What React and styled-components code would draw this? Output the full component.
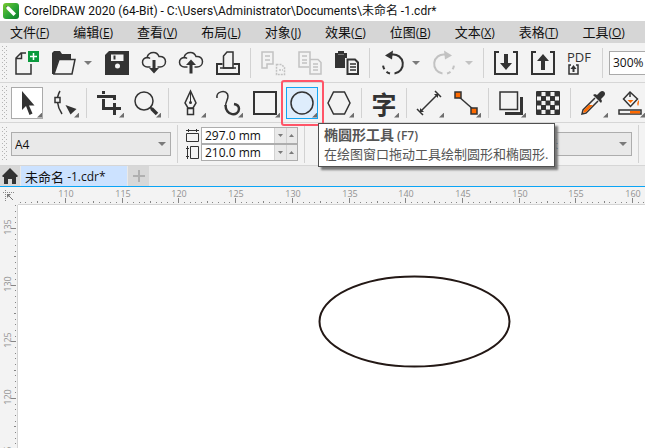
import React from "react";
import styled, { createGlobalStyle, css } from "styled-components";

const INK = "#333333";
const FADED = "#c2c2c2";
const ORANGE = "#ff6a00";

const GlobalStyle = createGlobalStyle`
  * { box-sizing: border-box; }
  body { margin: 0; }
  body, button, input, select {
    font-family: "Open Sans", "Noto Sans CJK SC", sans-serif;
    font-size: 12px;
    color: #111;
  }
  button { border: 0; padding: 0; background: none; }
`;

const Window = styled.div`
  min-height: 100vh;
  display: flex;
  flex-direction: column;
  overflow: hidden;
  background: #f3f3f3;
`;

const TitleBar = styled.header`
  height: 21px;
  display: flex;
  align-items: center;
  gap: 5px;
  padding-left: 3px;
  background: #fff;
  white-space: pre;
`;

const Title = styled.h1`
  margin: 0;
  font-family: Roboto, "Noto Sans CJK SC", sans-serif;
  font-size: 12px;
  line-height: 20px;
  font-weight: 400;
`;

const MenuBar = styled.nav`
  height: 22px;
  display: flex;
  align-items: center;
  gap: 24px;
  background: #d6d6d6;
  padding-left: 10px;
  overflow: hidden;
`;

const MenuItem = styled.button`
  flex: none;
  text-align: left;
  font-size: 13px;
  line-height: 20px;
  white-space: nowrap;
  span { font-size: 12px; }
`;

const Bar = styled.div`
  height: ${(p) => p.$height}px;
  display: flex;
  align-items: center;
  gap: 5px;
  padding-left: 2px;
  border-bottom: 1px solid #d6d6d6;
`;

const GripBox = styled.svg`
  flex: none;
  width: 6px;
  height: 34px;
  margin-right: -2px;
`;

const Divider = styled.span`
  flex: none;
  width: 3px;
  height: ${(p) => p.$height || 30}px;
  background: linear-gradient(#d2d2d2, #d2d2d2) center / 1px 100% no-repeat;
`;

const ToolButton = styled.button`
  position: relative;
  flex: none;
  width: 32px;
  height: 32px;
  display: grid;
  place-items: center;
  ${(p) => p.$look === "picked" && css`
    background: #fff;
    box-shadow: inset 0 0 0 1px #aaa;
  `}
  ${(p) => p.$look === "hover" && css`
    background: #deedfc;
    box-shadow: inset 0 0 0 1px #12a5f4;
  `}
  ${(p) => p.$flyout && css`
    &::after {
      content: "";
      position: absolute;
      right: 1px;
      bottom: 1px;
      width: 5px;
      height: 5px;
      background: #6e6e6e;
      clip-path: polygon(100% 0, 100% 100%, 0 100%);
    }
  `}
`;

const Anchor = styled.div`
  position: relative;
  flex: none;
`;

const Highlight = styled.span`
  position: absolute;
  inset: -7px -6px -7px -5px;
  border: 2px solid #ff5568;
  border-radius: 3px;
  pointer-events: none;
`;

const Tooltip = styled.div`
  position: absolute;
  z-index: 2;
  left: 32px;
  top: 36px;
  padding: 2px 6px 3px 5px;
  border: 1px solid #505050;
  background: #fff;
  box-shadow: 3px 3px 2px #777;
  color: #555;
  font-size: 13px;
  line-height: 18px;
  white-space: nowrap;
`;

const TooltipTitle = styled.strong`
  display: block;
  font-size: 14px;
  span { font-size: 12px; font-weight: 600; }
`;

const Split = styled.div`
  flex: none;
  display: flex;
`;

const DropButton = styled.button`
  width: 16px;
  height: 32px;
  display: grid;
  place-items: center;
`;

const Glyph = styled.svg`
  display: block;
  flex: none;
  overflow: visible;
  width: ${(p) => p.$w || 24}px;
  height: ${(p) => p.$h || 24}px;
`;

const TextTool = styled.span`
  font-family: "Noto Sans CJK SC", sans-serif;
  font-size: 25px;
  line-height: 24px;
  font-weight: 700;
  color: ${INK};
`;

const ZoomBox = styled.input`
  flex: none;
  width: 70px;
  height: 24px;
  padding: 0 3px;
  border: 1px solid #aaa;
  background: #fff;
`;

const SelectBox = styled.div`
  flex: none;
  width: ${(p) => p.$width}px;
  height: 24px;
  display: grid;
  align-items: center;
  border: 1px solid #adadad;
  background: #e9e9e9;
  > * { grid-area: 1 / 1; }
  > svg { justify-self: end; margin-right: 4px; pointer-events: none; }
`;

const Select = styled.select`
  appearance: none;
  width: 100%;
  height: 22px;
  padding: 0 3px;
  border: 0;
  background: transparent;
`;

const SizeGroup = styled.div`
  flex: none;
  display: grid;
  grid-template-columns: 15px 97px;
  align-items: center;
  margin-left: 2px;
`;

const SizeField = styled.div`
  height: 17px;
  display: flex;
  border: 1px solid #adadad;
  background: #e9e9e9;
`;

const SizeInput = styled.input`
  width: 72px;
  padding: 0 3px;
  border: 0;
  background: #fff;
`;

const StepButton = styled.button`
  flex: 1;
  display: grid;
  place-items: center;
  border-left: 1px solid #d2d2d2;
`;

const UnitGroup = styled.div`
  flex: none;
  display: flex;
  align-items: center;
  gap: 5px;
  margin-left: auto;
  padding-right: 5px;
`;

const TabBar = styled.div`
  height: 21px;
  display: flex;
  gap: 1px;
  background: #e9e9e9;
  border-bottom: 1px solid #0aa4f5;
`;

const Tab = styled.button`
  width: ${(p) => p.$width}px;
  display: flex;
  align-items: center;
  justify-content: ${(p) => (p.$current ? "flex-start" : "center")};
  padding-left: ${(p) => (p.$current ? 4 : 0)}px;
  background: ${(p) => (p.$current ? "#cce2ff" : "#d8d8d8")};
  font-size: 13px;
  white-space: pre;
  span { font-size: 12px; }
`;

const Workspace = styled.main`
  flex: 1;
  display: grid;
  grid-template-columns: 18px 1fr;
  grid-template-rows: 18px 1fr;
`;

const RulerOrigin = styled.button`
  display: grid;
  place-items: center;
`;

const Ruler = styled.svg`
  width: 100%;
  height: 100%;
  overflow: hidden;
  background: #f3f3f3;
  border: 0 solid #d4d4d4;
  border-width: ${(p) => (p.$vertical ? "0 1px 0 0" : "0 0 1px 0")};
  text { font-size: 9px; fill: #929292; text-anchor: middle; }
  rect { fill: #868686; }
`;

const RulerSlot = styled.div`
  position: relative;
  overflow: hidden;
  > svg { position: absolute; inset: 0; }
`;

const Canvas = styled.section`
  background: #fff;
  overflow: hidden;
  svg { display: block; width: 100%; height: 240px; }
`;

const s = (w = 2, c = INK) => ({ fill: "none", stroke: c, strokeWidth: w });

function Grip() {
  const dots = [];
  for (let y = 0; y < 34; y += 2) {
    for (let x = y % 4 === 0 ? 0 : 2; x < 6; x += 4) dots.push(<rect key={`${x}-${y}`} x={x} y={y} width="1" height="1" fill="#b4b4b4" />);
  }
  return <GripBox aria-hidden="true">{dots}</GripBox>;
}

const Caret = ({ color = "#7a7a7a", up, small }) => (
  <Glyph $w={small ? 5 : 8} $h={small ? 3 : 4} viewBox="0 0 8 4" preserveAspectRatio="none" aria-hidden="true">
    <path d={up ? "M0 4h8L4 0z" : "M0 0h8L4 4z"} fill={color} />
  </Glyph>
);

const arrowDown = "M10 3h4v9h4l-6 7-6-7h4z";
const arrowUp = "M10 19h4v-9h4l-6-7-6 7h4z";
const cloud = "M8.500 16H5.500A4.700 4.700 0 0 1 5 6.500C6 3 8.500 1.500 11.500 1.500c2.500 0 4.500 1.500 5.500 4 4-.5 6.500 2 6.500 5 0 3.500-2.500 5.500-5.500 5.500h-2.500M5 6.500q2 0 3 1";
const turn = (c) => (
  <>
    <path d="M9 3.500h3a9.500 9.500 0 0 1 2.500 19" {...s(2, c)} />
    <path d="M10 22.500A9.500 9.500 0 0 1 3 13" {...s(2, c)} strokeDasharray="4 3" />
    <path d="M5 4.500l8-5-1 9z" fill={c} />
  </>
);

const art = {
  create: <>
    <path d="M16 13v10H1V7l5-5h5M1 7.500h5.500V2" {...s(1.5)} />
    <path d="M13 0h11v11H13z" fill="#0a9a3d" />
    <path d="M18.500 2v7M15 5.500h7" {...s(1.5, "#fff")} />
  </>,
  open: <>
    <path d="M0 23V2l2-2h6l2 3h9v5H7L2 23z" fill={INK} />
    <path d="M7 8.500h16L20 23H2z" fill="#f3f3f3" stroke={INK} strokeWidth="1.5" />
  </>,
  save: <>
    <path d="M4 0h20v24H0V4z" fill={INK} />
    <path d="M6 3.500h12.500V10H6z" fill="#f3f3f3" />
    <path d="M8.500 4.500h2v4h-2z" fill={INK} />
    <circle cx="12.500" cy="15" r="2.500" fill="#f3f3f3" />
  </>,
  download: <><path d={cloud} {...s(1.5)} /><path d="M10.500 9h3v8h3.500l-5 5.500L7 17h3.500z" fill={INK} /></>,
  upload: <><path d={cloud} {...s(1.5)} /><path d="M10.500 22.500h3V14H17l-5-5.500L7 14h3.500z" fill={INK} /></>,
  print: <>
    <path d="M6.500 13H1v10h22V13h-5.500" {...s()} />
    <path d="M7.500 17V5L11 1h6v16z" {...s(1.5)} /><path d="M4 17h16" {...s(1.5)} />
  </>,
  cut: <>
    <path d="M12 9V1H1v16h5v-4h6V9M4 5h5M4 9h5" {...s(1.5, FADED)} />
    <path d="M15.500 13.500h5l3 3v7h-8zM18 19h4" {...s(1.5, FADED)} strokeDasharray="2 1" />
  </>,
  copy: <>
    <path d="M11 16H1V1h11v7M4 5h5M4 9h5M4 12h5" {...s(1.5, FADED)} />
    <path d="M12 8.500h8l3 3V23H12zM15 13h5M15 16h5M15 19h5" {...s(1.5, FADED)} />
  </>,
  paste: <>
    <path d="M0 2h3V0h6v2h3v5h-2v10H0z" fill={INK} /><path d="M3 3.500h6" {...s(1, "#777")} />
    <path d="M12.500 8.500H20l3 3V23H12.500z" {...s()} /><path d="M15 13h6M15 16h6M15 19h6" {...s(1.5)} />
  </>,
  undo: turn(INK),
  redo: <g transform="matrix(-1 0 0 1 24 0)">{turn(FADED)}</g>,
  bringIn: <><path d="M5 1H1v22h22V1h-4" {...s()} /><path d={arrowDown} fill={INK} /></>,
  sendOut: <><path d="M5 1H1v22h22V1h-4" {...s()} /><path d={arrowUp} fill={INK} /></>,
  pdf: <>
    <text x="-1" y="11" fontSize="13" fontWeight="500" fill={INK}>PDF</text>
    <path d="M3 14H1v9h9v-9H8" {...s(1.5)} /><path d="M4.500 21h2v-3h2l-3-4-3 4h2z" fill={INK} />
  </>,
  pick: <path d="M7 0v19l4-4 3.500 9 3-1.500L14 14.500h5.500z" fill={INK} />,
  shape: <>
    <path d="M8 0Q5 5 5.500 11T10 23" {...s(1.5)} />
    <path d="M3 6.500h5v5H3z" fill="#f3f3f3" stroke={INK} strokeWidth="1.5" />
    <path d="M13.500 14l11 4-6 5.500z" fill={INK} />
  </>,
  crop: <path d="M0 5.500h17.500V9M17.500 12v12M6.500 0v3M6.500 8v9.500H24" {...s(3)} />,
  zoom: <><circle cx="10" cy="10" r="9" {...s(1.5)} /><path d="M16 16l2 2" {...s(2)} /><path d="M17.500 17.500L23 23" {...s(3.5)} /></>,
  pen: <>
    <path d="M11.500 0L6 12l3 5h5l3-5z" {...s(1.5)} /><path d="M11.500 2v9" {...s(1)} />
    <circle cx="11.500" cy="11.500" r="1.500" fill={INK} /><path d="M8.500 17.500h6v6h-6z" {...s(1.5)} />
  </>,
  curve: <>
    <path d="M1 7C0 0 9-1 11.500 3c2 4-2 7-2 12" {...s(1.5)} />
    <path d="M9.500 14c0 11 13 12 13.500 4 0-3-2-4.500-5-5" {...s(2.5)} />
  </>,
  rectangle: <path d="M1 1h22v22H1z" {...s()} />,
  ellipse: <circle cx="12" cy="12" r="11" {...s(1.5)} />,
  polygon: <path d="M1 12L6.500 1h11L23 12l-5.500 11h-11z" {...s(1.5)} />,
  dimension: <><path d="M3 21L21 3M18 0l6 6M0 18l6 6" {...s(1.5)} /><path d="M3 21v-4l4 4zM21 3v4l-4-4z" fill={INK} /></>,
  connector: <>
    <path d="M4 5l16 14" {...s(1.5)} />
    <path d="M1 1h6v6H1zM17 17h6v6h-6z" fill={ORANGE} stroke={INK} strokeWidth="1.5" />
  </>,
  shadow: <><path d="M6 24v-3h15V6h3v18z" fill={INK} /><path d="M1 1h17.500v17.500H1z" {...s(1.5)} /></>,
  transparency: <>
    <rect width="24" height="24" rx="1" fill={INK} />
    {[0, 1, 2, 3, 4].map((r) => [0, 1, 2, 3, 4].map((c) => (r + c) % 2 === 1 && <rect key={`${r}${c}`} x={1 + c * 4.5} y={1 + r * 4.5} width="4" height="4" fill="#f3f3f3" />))}
  </>,
  eyedropper: <>
    <path d="M14 7L2 19l-1 4 4-1L17 10" fill="#f3f3f3" stroke={INK} strokeWidth="1.5" />
    <path d="M8 14l-5 5-1 3 3-1 7-7z" fill={ORANGE} />
    <path d="M12 4l2-1 2 1 3-3c3-3 7 1 4 4l-3 3 1 2-1 2z" fill={INK} />
  </>,
  fill: <>
    <path d="M12 1l7.500 7-7 7.500-7-7.500z" {...s(1.5)} /><path d="M12 1v5" {...s(1.5)} /><path d="M9.500 9h6l-3 3z" fill={ORANGE} />
    <path d="M21 9q-3 3-1 6 1-1 1-6" fill={ORANGE} />
    <path d="M1 19h22v4H1z" fill="#f3f3f3" stroke={INK} strokeWidth="1.5" /><path d="M12 20h10v2.500H12z" fill={ORANGE} />
  </>,
};

const Icon = ({ name }) => <Glyph viewBox="0 0 24 24" aria-hidden="true">{art[name]}</Glyph>;

const Tool = ({ name, label, ...rest }) => (
  <ToolButton type="button" aria-label={label} {...rest}><Icon name={name} /></ToolButton>
);

const menus = [["文件", "F"], ["编辑", "E"], ["查看", "V"], ["布局", "L"], ["对象", "J"], ["效果", "C"], ["位图", "B"], ["文本", "X"], ["表格", "T"], ["工具", "O"]];

const MINOR = 5.67;
function ticks(origin, labels, vertical) {
  const out = [];
  for (let i = -9; i < 400; i += 1) {
    const at = Math.round(origin + i * MINOR);
    const major = i % 10 === 0;
    const len = major ? 5 : i % 5 === 0 ? 2 : 1;
    const label = major && labels[i / 10];
    if (at < 0) continue;
    out.push(vertical
      ? <rect key={i} x={16 - len} y={at} width={len} height="1" />
      : <rect key={i} x={at} y={16 - len} width="1" height={len} />);
    if (label) {
      out.push(vertical
        ? <text key={`t${i}`} transform={`translate(11 ${at - 1}) rotate(-90)`}>{label}</text>
        : <text key={`t${i}`} x={at + 1} y="10">{label}</text>);
    }
  }
  return out;
}

const across = [110, 115, 120, 125, 130, 135, 140, 145, 150, 155, 160];
const down = [135, 130, 125, 120, 115];

export default function App() {
  return (
    <>
      <GlobalStyle />
      <Window>
        <TitleBar>
          <Glyph $w={16} $h={16} viewBox="0 0 16 16" aria-hidden="true">
            <defs><linearGradient id="leaf" x1="0" y1="0" x2="1" y2="1"><stop stopColor="#7ac92f" /><stop offset=".5" stopColor="#2ea836" /><stop offset="1" stopColor="#087a2c" /></linearGradient></defs>
            <rect width="16" height="16" rx="3" fill="url(#leaf)" />
            <path d="M3 3l3 .5 7 7-2.500 2.500-7-7z" fill="#fff" /><path d="M3 3l1.500.5-1 1z" fill="#222" />
          </Glyph>
          <Title>{"CorelDRAW 2020 (64-Bit) - C:\\Users\\Administrator\\Documents\\未命名 -1.cdr*"}</Title>
        </TitleBar>
        <MenuBar>
          {menus.map(([name, key]) => <MenuItem key={key} type="button">{name}<span>(<u>{key}</u>)</span></MenuItem>)}
        </MenuBar>
        <Bar $height={40} role="toolbar" aria-label="标准">
          <Grip />
          <Tool name="create" label="新建" />
          <Split><Tool name="open" label="打开" /><DropButton type="button" aria-label="最近"><Caret /></DropButton></Split>
          <Tool name="save" label="保存" />
          <Tool name="download" label="下载" />
          <Tool name="upload" label="上传" />
          <Tool name="print" label="打印" />
          <Divider />
          <Tool name="cut" label="剪切" disabled />
          <Tool name="copy" label="复制" disabled />
          <Tool name="paste" label="粘贴" />
          <Divider />
          <Split><Tool name="undo" label="撤消" /><DropButton type="button" aria-label="撤消列表"><Caret /></DropButton></Split>
          <Split><Tool name="redo" label="重做" disabled /><DropButton type="button" aria-label="重做列表" disabled><Caret color={FADED} /></DropButton></Split>
          <Divider />
          <Tool name="bringIn" label="导入" />
          <Tool name="sendOut" label="导出" />
          <Tool name="pdf" label="发布为 PDF" />
          <Divider />
          <ZoomBox aria-label="缩放级别" defaultValue="300%" />
        </Bar>
        <Bar $height={40} role="toolbar" aria-label="工具箱">
          <Grip />
          <Tool name="pick" label="选择" $look="picked" $flyout />
          <Tool name="shape" label="形状" $flyout />
          <Divider />
          <Tool name="crop" label="裁剪" $flyout />
          <Tool name="zoom" label="缩放" $flyout />
          <Divider />
          <Tool name="pen" label="钢笔" $flyout />
          <Tool name="curve" label="曲线" $flyout />
          <Tool name="rectangle" label="矩形" $flyout />
          <Anchor>
            <Tool name="ellipse" label="椭圆形" $look="hover" $flyout aria-describedby="ellipse-tip" />
            <Highlight />
            <Tooltip id="ellipse-tip" role="tooltip">
              <TooltipTitle>椭圆形工具<span> (F7)</span></TooltipTitle>
              在绘图窗口拖动工具绘制圆形和椭圆形.
            </Tooltip>
          </Anchor>
          <Tool name="polygon" label="多边形" $flyout />
          <Divider />
          <ToolButton type="button" $flyout><TextTool>字</TextTool></ToolButton>
          <Divider />
          <Tool name="dimension" label="度量" $flyout />
          <Tool name="connector" label="连接器" $flyout />
          <Divider />
          <Tool name="shadow" label="阴影" $flyout />
          <Tool name="transparency" label="透明度" />
          <Divider />
          <Tool name="eyedropper" label="颜色滴管" $flyout />
          <Tool name="fill" label="交互式填充" $flyout />
        </Bar>
        <Bar $height={43} role="toolbar" aria-label="属性栏">
          <Grip />
          <SelectBox $width={160}>
            <Select aria-label="页面大小" defaultValue="A4"><option>A4</option></Select>
            <Caret />
          </SelectBox>
          <Divider $height={38} />
          <SizeGroup>
            <label htmlFor="page-width" aria-label="宽度">
              <Glyph $w={13} $h={13} viewBox="0 0 13 13"><path d="M0 1.500h13M2.500 0v3M10.500 0v3M.5 4.500h12v8H.5z" {...s(1)} /></Glyph>
            </label>
            <SizeField>
              <SizeInput id="page-width" defaultValue="297.0 mm" />
              <StepButton type="button" aria-label="减小宽度"><Caret small /></StepButton>
              <StepButton type="button" aria-label="增大宽度"><Caret small up /></StepButton>
            </SizeField>
            <label htmlFor="page-height" aria-label="高度">
              <Glyph $w={13} $h={13} viewBox="0 0 13 13"><path d="M1.500 0v13M0 2.500h3M0 10.500h3M4.500.5h8v12h-8z" {...s(1)} /></Glyph>
            </label>
            <SizeField>
              <SizeInput id="page-height" defaultValue="210.0 mm" />
              <StepButton type="button" aria-label="减小高度"><Caret small /></StepButton>
              <StepButton type="button" aria-label="增大高度"><Caret small up /></StepButton>
            </SizeField>
          </SizeGroup>
          <Divider $height={38} />
          <UnitGroup>
            <SelectBox $width={102}>
              <Select aria-label="单位" defaultValue="毫米"><option>毫米</option></Select>
              <Caret />
            </SelectBox>
            <Divider $height={38} />
          </UnitGroup>
        </Bar>
        <TabBar>
          <Tab type="button" $width={20} aria-label="欢迎屏幕">
            <Glyph $w={16} $h={16} viewBox="0 0 16 16"><path d="M8 0l8 8-1 1h-1v7h-4v-5H6v5H2V9H1L0 8z" fill={INK} /></Glyph>
          </Tab>
          <Tab type="button" $width={106} $current>未命名<span>{" -1.cdr*"}</span></Tab>
          <Tab type="button" $width={21} aria-label="新文档">
            <Glyph $w={12} $h={12} viewBox="0 0 12 12"><path d="M6 0v12M0 6h12" {...s(2, "#b0b0b0")} /></Glyph>
          </Tab>
        </TabBar>
        <Workspace>
          <RulerOrigin type="button" aria-label="标尺原点">
            <Glyph $w={12} $h={12} viewBox="0 0 12 12">
              <path d="M0 2.500h12M2.500 0v12" {...s(1, "#888")} strokeDasharray="1 1" />
              <path d="M4 4l6 6" {...s(1, "#777")} /><path d="M4 4h4L4 8z" fill="#777" />
            </Glyph>
          </RulerOrigin>
          <RulerSlot><Ruler aria-hidden="true">{ticks(47, across, false)}</Ruler></RulerSlot>
          <RulerSlot><Ruler $vertical aria-hidden="true">{ticks(23, down, true)}</Ruler></RulerSlot>
          <Canvas aria-label="绘图窗口">
            <svg><ellipse cx="396.500" cy="116.500" rx="95" ry="45" fill="none" stroke="#231815" strokeWidth="2" /></svg>
          </Canvas>
        </Workspace>
      </Window>
    </>
  );
}
